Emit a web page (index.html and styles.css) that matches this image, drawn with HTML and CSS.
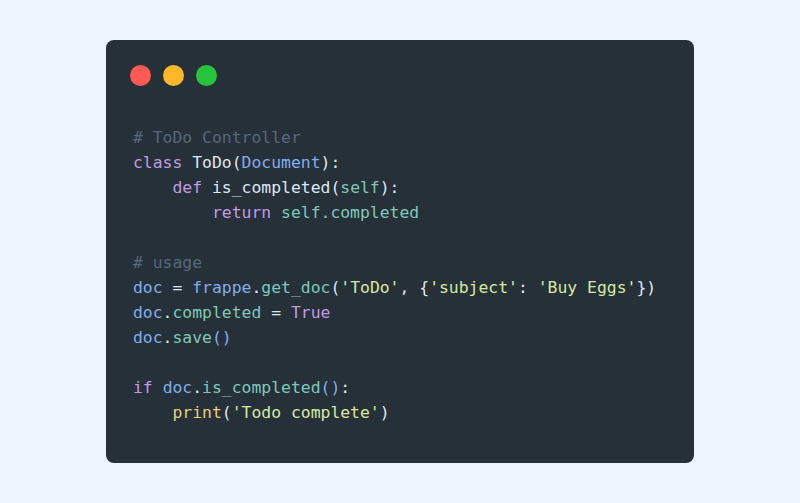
FILE: index.html
```html
<!DOCTYPE html>
<html>
<head>
<meta charset="utf-8">
<link rel="stylesheet" href="styles.css">
</head>
<body>
<div class="page">
  <div class="card">
    <div class="dots">
      <span class="dot red"></span>
      <span class="dot yellow"></span>
      <span class="dot green"></span>
    </div>
<pre class="code"><span class="cm"># ToDo Controller</span>
<span class="kw">class</span> <span class="tx">ToDo(</span><span class="bl">Document</span><span class="tx">):</span>
    <span class="kw">def</span> <span class="tx">is_completed(</span><span class="te">self</span><span class="tx">):</span>
        <span class="kw">return</span> <span class="te">self.completed</span>

<span class="cm"># usage</span>
<span class="bl">doc</span> <span class="tx">=</span> <span class="bl">frappe</span><span class="tx">.</span><span class="te">get_doc</span><span class="tx">(</span><span class="st">'ToDo'</span><span class="tx">,</span> <span class="tx">{</span><span class="st">'subject'</span><span class="tx">:</span> <span class="st">'Buy Eggs'</span><span class="tx">})</span>
<span class="bl">doc</span><span class="tx">.</span><span class="te">completed</span> <span class="tx">=</span> <span class="kw">True</span>
<span class="bl">doc</span><span class="tx">.</span><span class="te">save</span><span class="bl">()</span>

<span class="kw">if</span> <span class="bl">doc</span><span class="tx">.</span><span class="te">is_completed</span><span class="bl">()</span><span class="tx">:</span>
    <span class="ye">print</span><span class="tx">(</span><span class="st">'Todo complete'</span><span class="tx">)</span></pre>
  </div>
</div>
</body>
</html>
```
FILE: styles.css
```css
html, body {
  margin: 0;
  padding: 0;
  background: #ecf4fd;
}
.page {
  width: 800px;
  height: 503px;
  padding-top: 40px;
  padding-left: 106px;
  box-sizing: border-box;
}
.card {
  width: 588px;
  height: 423px;
  background: #263039;
  border-radius: 8px;
  box-sizing: border-box;
  padding: 64px 0 0 27px;
  position: relative;
}
.dots {
  position: absolute;
  top: 25px;
  left: 24px;
  display: flex;
  gap: 12px;
}
.dot {
  width: 21px;
  height: 21px;
  border-radius: 50%;
  display: block;
}
.red { background: #fd5a52; }
.yellow { background: #fdb72a; }
.green { background: #25c43c; }
.code {
  margin: 21px 0 0 0;
  font-family: "DejaVu Sans Mono", "Liberation Mono", monospace;
  font-size: 16.4px;
  line-height: 25px;
  color: #dfe7ee;
}
.cm { color: #56687a; }
.kw { color: #c39ae0; }
.tx { color: #dfe7ee; }
.bl { color: #82aeea; }
.te { color: #7fc8b8; }
.st { color: #d9e8a0; }
.ye { color: #e6d07a; }
```
